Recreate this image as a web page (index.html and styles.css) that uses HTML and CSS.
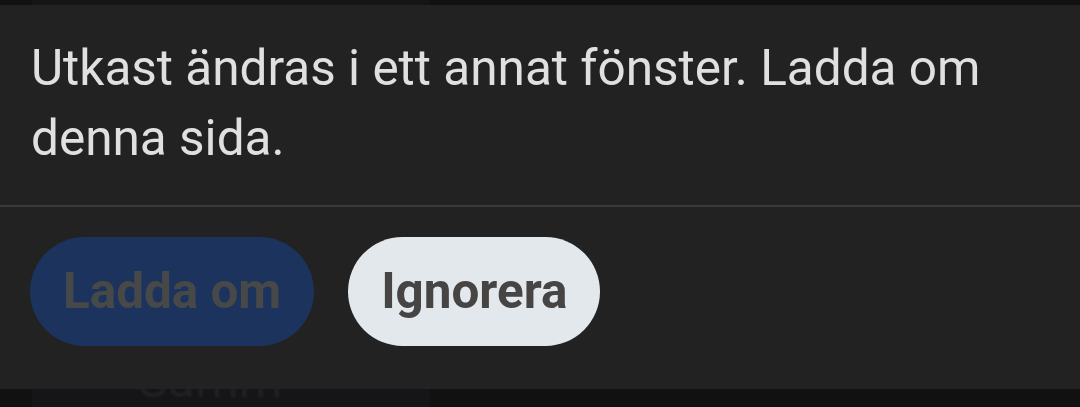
FILE: index.html
```html
<!DOCTYPE html>
<html lang="sv">
<head>
<meta charset="utf-8">
<title>Utkast</title>
<link rel="stylesheet" href="styles.css">
</head>
<body>
<div class="page">
  <div class="column">
    <div class="column-label">Samm</div>
  </div>
</div>
<div class="toast" role="alert">
  <p class="toast-message">Utkast ändras i ett annat fönster. Ladda om denna sida.</p>
  <div class="toast-actions">
    <button class="btn btn-primary" disabled>Ladda om</button>
    <button class="btn btn-secondary">Ignorera</button>
  </div>
</div>
</body>
</html>
```

FILE: styles.css
```css
html, body {
  margin: 0;
  padding: 0;
}
body {
  width: 1080px;
  height: 407px;
  overflow: hidden;
  background: #111111;
  font-family: Roboto, "Noto Sans", sans-serif;
  position: relative;
}
.page {
  display: flex;
  height: 407px;
  padding-left: 32px;
  box-sizing: border-box;
}
.column {
  width: 398px;
  height: 100%;
  background: #151518;
  display: flex;
  flex-direction: column;
  justify-content: flex-end;
}
.column-label {
  font-size: 50px;
  line-height: 50px;
  color: #212123;
  padding-left: 106px;
  filter: blur(1px);
  transform: translateY(-2px);
}
.toast {
  position: absolute;
  top: 5px;
  left: 0;
  right: 0;
  height: 384px;
  background: #222222;
  display: flex;
  flex-direction: column;
  box-sizing: border-box;
}
.toast-message {
  margin: 0;
  padding: 28px 60px 32px 31px;
  font-size: 49.5px;
  line-height: 70px;
  color: #e0e0e0;
  border-bottom: 2px solid #3a3a3a;
}
.toast-actions {
  display: flex;
  gap: 34px;
  padding: 30px 30px 0;
}
.btn {
  height: 109px;
  border: none;
  border-radius: 55px;
  padding: 0 33px;
  font-family: Roboto, "Noto Sans", sans-serif;
  font-weight: 700;
  font-size: 49.4px;
  line-height: 109px;
}
.btn-primary {
  background: #1c345d;
  color: #474848;
}
.btn-secondary {
  background: #e3e8ec;
  color: #474444;
}
```
